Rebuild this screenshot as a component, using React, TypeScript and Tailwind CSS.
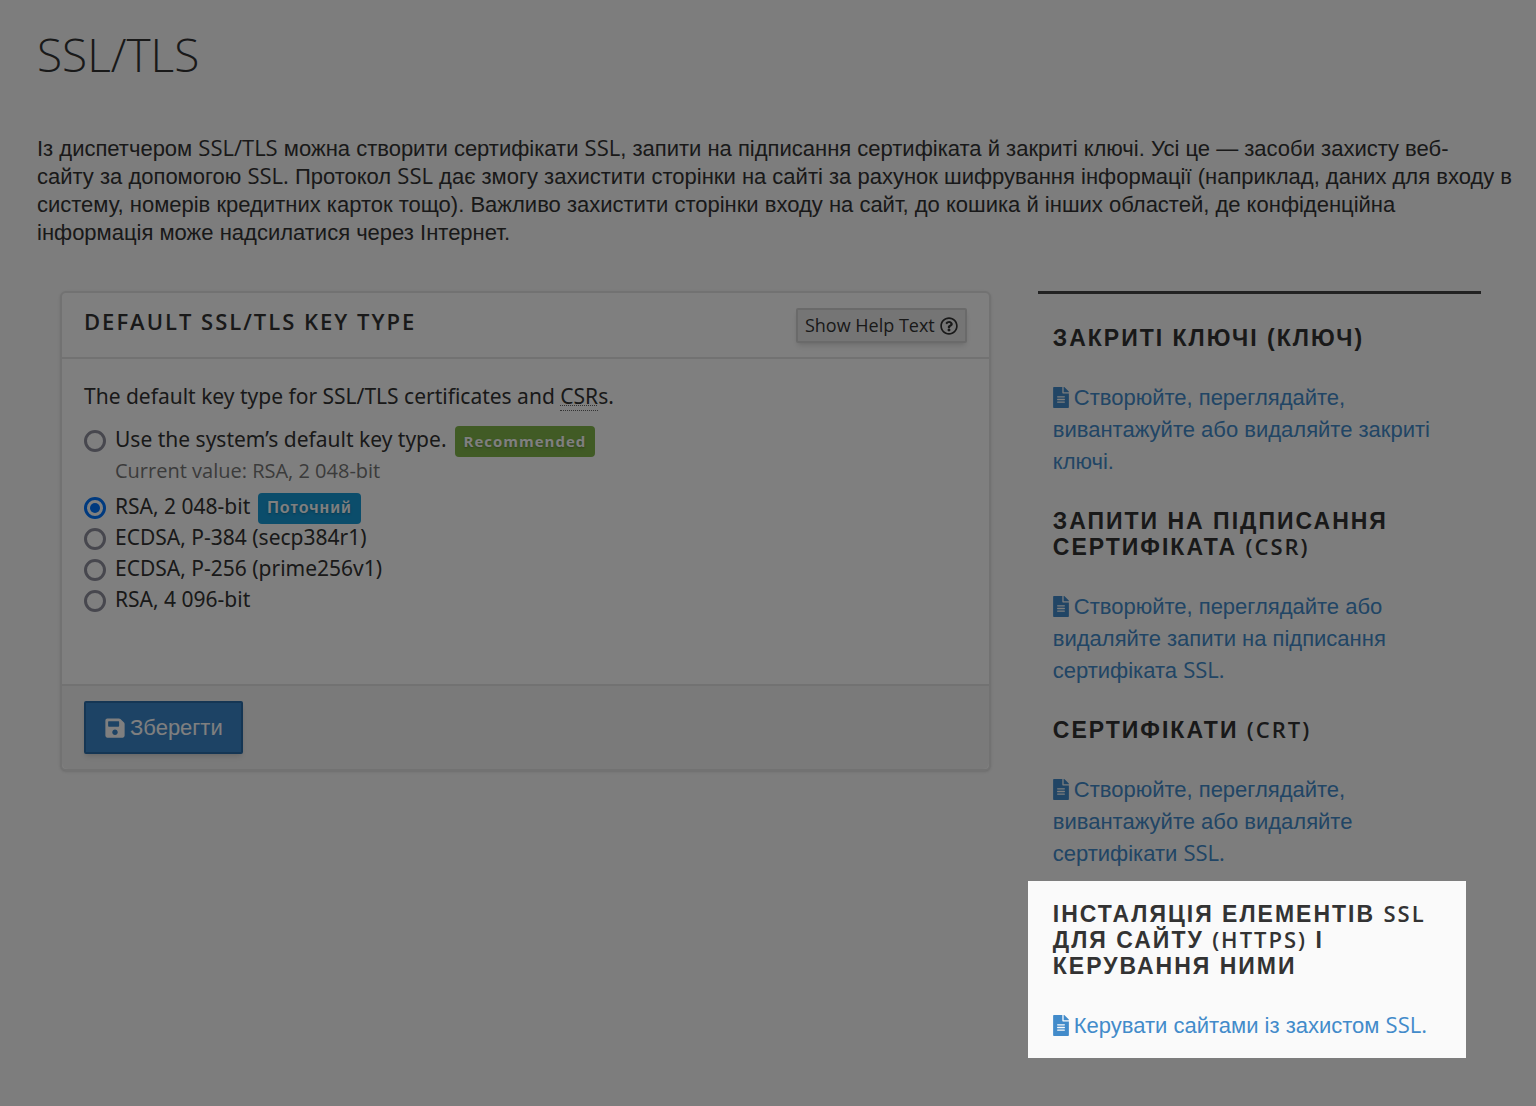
import React from 'react'
import { FaFileAlt, FaSave, FaRegQuestionCircle } from 'react-icons/fa'

interface keyTypeProps {
    id: string
    label: string
    note?: string
    badge?: string
    badgeColor?: string
}

interface sectionProps {
    title: string
    link: string
    active?: boolean
}

const keyTypes: keyTypeProps[] = [
    {
        id: 'system',
        label: 'Use the system’s default key type.',
        note: 'Current value: RSA, 2 048-bit',
        badge: 'Recommended',
        badgeColor: "bg-[#82b74b] font-['Open_Sans',sans-serif] text-[15px]",
    },
    {
        id: 'rsa-2048',
        label: 'RSA, 2 048-bit',
        badge: 'Поточний',
        badgeColor: "bg-[#179bd7] font-['Liberation_Sans',sans-serif] text-[16px]",
    },
    { id: 'ecdsa-p384', label: 'ECDSA, P-384 (secp384r1)' },
    { id: 'ecdsa-p256', label: 'ECDSA, P-256 (prime256v1)' },
    { id: 'rsa-4096', label: 'RSA, 4 096-bit' },
]

const sections: sectionProps[] = [
    {
        title: 'Закриті ключі (ключ)',
        link: 'Створюйте, переглядайте, вивантажуйте або видаляйте закриті ключі.',
    },
    {
        title: 'Запити на підписання сертифіката (CSR)',
        link: 'Створюйте, переглядайте або видаляйте запити на підписання сертифіката SSL.',
    },
    {
        title: 'Сертифікати (CRT)',
        link: 'Створюйте, переглядайте, вивантажуйте або видаляйте сертифікати SSL.',
    },
    {
        title: 'Інсталяція елементів SSL для сайту (HTTPS) і керування ними',
        link: 'Керувати сайтами із захистом SSL.',
        active: true,
    },
]

// latin words are set in Open Sans, cyrillic stays in the parent font
const Mixed = ({ text, className = '' }: { text: string; className?: string }) => (
    <>
        {text.split(/(\(?[A-Za-z/]+[).]?)/).map((part, i) =>
            i % 2 ? (
                <span key={i} className={`font-['Open_Sans',sans-serif] leading-none ${className}`}>
                    {part}
                </span>
            ) : (
                part
            )
        )}
    </>
)

const App = () => {
    return (
        <div className="min-h-screen overflow-hidden bg-[#fafafa] text-[#333] font-['Open_Sans',sans-serif]">
            {/* intro */}
            <header className="pt-[23px] pr-[20px] pl-[37px]">
                <h1 className="text-[46px] leading-[62px] font-light">SSL/TLS</h1>
                <p className="mt-[50px] text-[22px] leading-[28px] font-['Liberation_Sans',sans-serif]">
                    <Mixed text="Із диспетчером SSL/TLS можна створити сертифікати SSL, запити на підписання сертифіката й закриті ключі. Усі це — засоби захисту веб-" />
                    <br />
                    <Mixed text="сайту за допомогою SSL. Протокол SSL дає змогу захистити сторінки на сайті за рахунок шифрування інформації (наприклад, даних для входу в систему, номерів кредитних карток тощо). Важливо захистити сторінки входу на сайт, до кошика й інших областей, де конфіденційна інформація може надсилатися через Інтернет." />
                </p>
            </header>

            <main className="grid grid-cols-[21fr_10fr] items-start gap-[47px] pt-[44px] pr-[55px] pl-[60px]">
                {/* key type */}
                <form className="rounded-md border-2 border-[#e4e4e4] bg-white shadow-sm">
                    <div className="flex items-start justify-between border-b-2 border-[#e4e4e4] px-[22px] pt-[15px] pb-[14px]">
                        <h2 className="text-[22px] leading-[26px] font-semibold tracking-[2px] uppercase">
                            Default SSL/TLS Key Type
                        </h2>
                        <button
                            type="button"
                            className="flex h-[35px] items-center gap-[5px] rounded-xs border-2 border-[#d4d4d4] bg-[#ebebeb] px-[7px] text-[18px] shadow-md"
                        >
                            Show Help Text
                            <FaRegQuestionCircle />
                        </button>
                    </div>

                    <div className="h-[325px] px-[22px] pt-[22px] text-[21px] leading-[31px] font-['Noto_Sans',sans-serif]">
                        <p className="mb-[12px]">
                            The default key type for SSL/TLS certificates and{' '}
                            <abbr
                                title="Certificate Signing Request"
                                className="border-b border-dotted border-[#666] underline decoration-[#666] decoration-dotted decoration-1"
                            >
                                CSR
                            </abbr>
                            s.
                        </p>
                        {keyTypes.map((item: keyTypeProps) => {
                            return (
                                <div key={item.id} className="flex items-start gap-[9px]">
                                    <input
                                        type="radio"
                                        name="keyType"
                                        id={item.id}
                                        defaultChecked={item.id === 'rsa-2048'}
                                        className="mt-[6px] size-[22px] shrink-0 appearance-none rounded-full border-3 border-[#8f8f9d] bg-white checked:border-[#0074ff] checked:bg-[#0074ff] checked:bg-clip-content checked:p-[3px]"
                                    />
                                    <label htmlFor={item.id}>
                                        <span className="flex gap-[8px]">
                                            {item.label}
                                            {item.badge && (
                                                <span
                                                    className={`mt-[2px] -mb-[2px] h-[31px] rounded-sm px-[9px] leading-[30px] font-bold tracking-[1px] text-white text-shadow-md ${item.badgeColor}`}
                                                >
                                                    {item.badge}
                                                </span>
                                            )}
                                        </span>
                                        {item.note && (
                                            <span className="mt-[2px] mb-[6px] block text-[20px] leading-[28px] font-['Open_Sans',sans-serif] text-[#777]">
                                                {item.note}
                                            </span>
                                        )}
                                    </label>
                                </div>
                            )
                        })}
                    </div>

                    <div className="rounded-b-md border-t-2 border-[#e4e4e4] bg-[#f5f5f5] px-[22px] py-[15px]">
                        <button
                            type="submit"
                            className="flex h-[53px] items-center gap-[4px] rounded-xs border-2 border-[#2a6ca8] bg-[#3a87cb] px-[18px] font-['Liberation_Sans',sans-serif] text-[22px] text-white shadow-md"
                        >
                            <FaSave />
                            Зберегти
                        </button>
                    </div>
                </form>

                {/* certificates */}
                <aside className="border-t-3 border-[#444] px-[15px] pt-[31px] font-['Liberation_Sans',sans-serif]">
                    {sections.map((item: sectionProps) => {
                        return (
                            <section
                                key={item.title}
                                className={
                                    item.active
                                        ? 'relative z-10 -mt-[19px] -ml-[25px] bg-[#fafafa] pt-[20px] pb-[16px] pl-[25px] shadow-[0_0_0_9999px_rgba(0,0,0,0.5)]'
                                        : 'mb-[30px]'
                                }
                            >
                                <h2 className="text-[23px] leading-[26px] font-bold tracking-[2px] uppercase">
                                    <Mixed text={item.title} className="text-[22px] font-semibold" />
                                </h2>
                                <a
                                    href="#"
                                    className="mt-[31px] block text-[22px] leading-[32px] text-[#428bca]"
                                >
                                    <FaFileAlt className="mr-[5px] mb-[4px] inline h-[21px] w-[16px]" />
                                    <Mixed text={item.link} />
                                </a>
                            </section>
                        )
                    })}
                </aside>
            </main>
        </div>
    )
}

export default App
